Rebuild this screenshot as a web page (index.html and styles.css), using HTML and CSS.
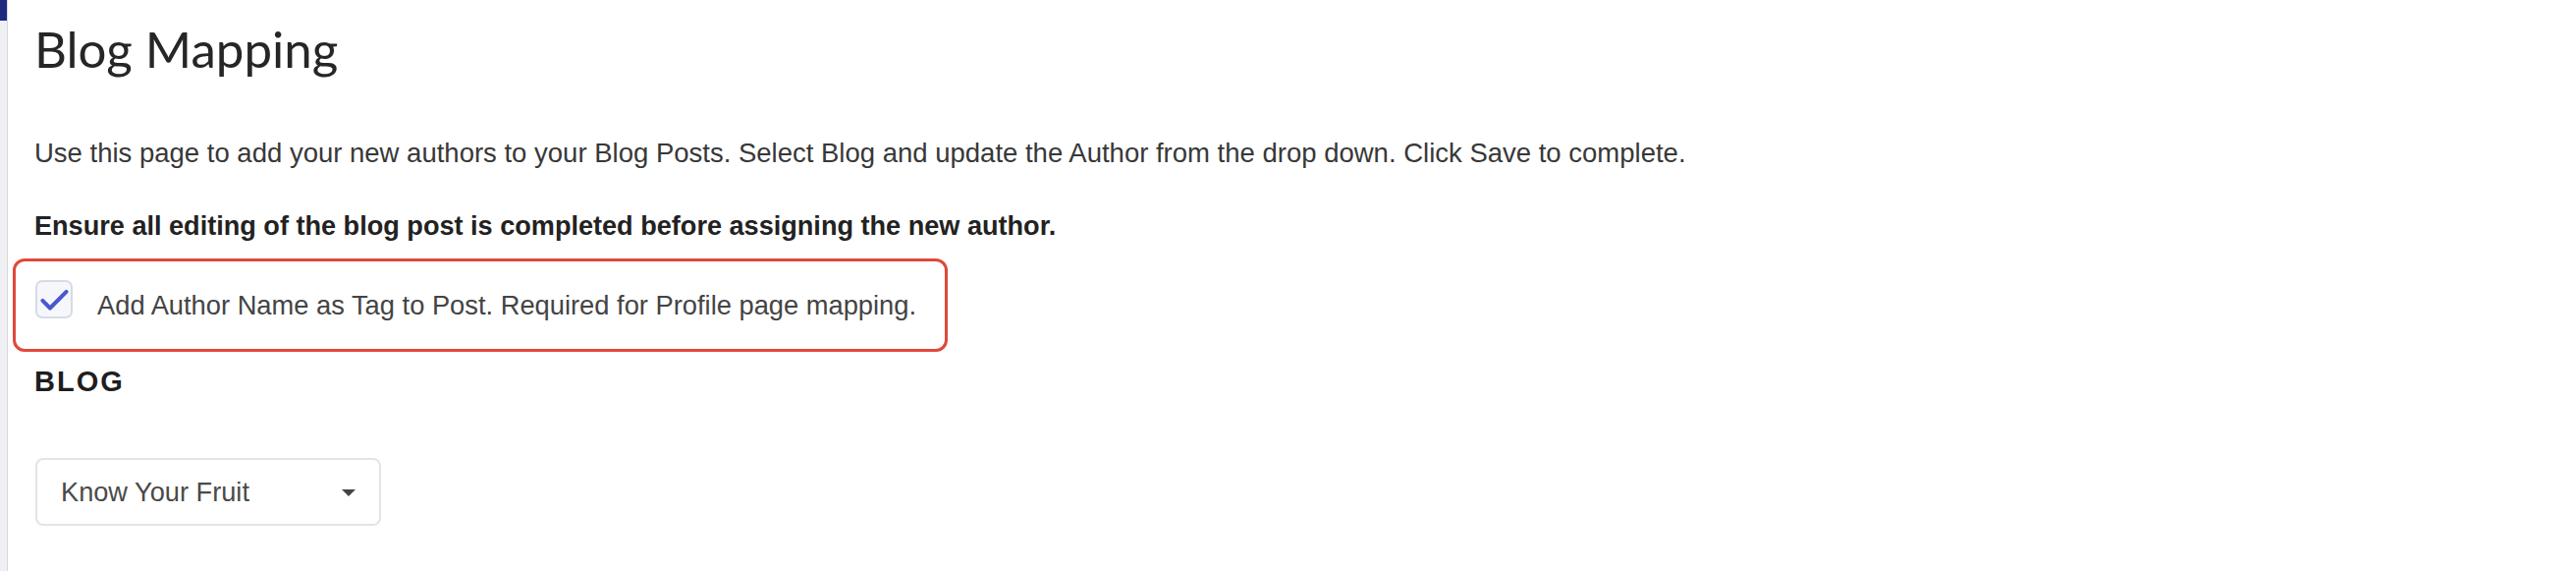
FILE: index.html
```html
<!DOCTYPE html>
<html lang="en">
<head>
<meta charset="utf-8">
<title>Blog Mapping</title>
<link rel="stylesheet" href="styles.css">
</head>
<body>
<div class="app">
  <aside class="rail"><div class="rail-top"></div></aside>
  <main class="content">
    <h1 class="title">Blog Mapping</h1>
    <p class="intro">Use this page to add your new authors to your Blog Posts. Select Blog and update the Author from the drop down. Click Save to complete.</p>
    <p class="warn">Ensure all editing of the blog post is completed before assigning the new author.</p>
    <div class="highlight">
      <label class="check-row">
        <span class="checkbox">
          <svg viewBox="0 0 38 38" width="38" height="38"><path d="M6 20 L14.5 28.5 L33 10" fill="none" stroke="#4b57d1" stroke-width="4.5" stroke-linecap="round" stroke-linejoin="round"/></svg>
        </span>
        <span class="check-label">Add Author Name as Tag to Post. Required for Profile page mapping.</span>
      </label>
    </div>
    <h2 class="section">BLOG</h2>
    <div class="select">
      <span class="select-text">Know Your Fruit</span>
      <span class="caret"></span>
    </div>
  </main>
</div>
</body>
</html>
```
FILE: styles.css
```css
html, body {
  margin: 0;
  padding: 0;
  background: #ffffff;
}
.app {
  display: flex;
  min-height: 581px;
}
.rail {
  width: 7px;
  flex: 0 0 7px;
  background: #eff0f4;
  border-right: 1px solid #d6d8de;
}
.rail-top {
  height: 21px;
  background: #1d2b7d;
}
.content {
  flex: 1;
  padding-left: 27px;
  display: flex;
  flex-direction: column;
  align-items: flex-start;
}
.title {
  margin: 20px 0 0 0;
  font-family: Lato, "Liberation Sans", sans-serif;
  font-weight: 400;
  font-size: 51px;
  line-height: 60px;
  color: #262626;
}
.intro {
  margin: 60px 0 0 0;
  font-family: "Liberation Sans", Arial, sans-serif;
  font-size: 27.5px;
  line-height: 32px;
  color: #383838;
}
.warn {
  margin: 42px 0 0 0;
  font-family: "Liberation Sans", Arial, sans-serif;
  font-weight: 700;
  font-size: 27.1px;
  line-height: 32px;
  color: #222222;
}
.highlight {
  margin: 17px 0 0 -22px;
  width: 926px;
  height: 89px;
  border: 3px solid #e0483a;
  border-radius: 12px;
  display: flex;
  align-items: center;
  padding-left: 20px;
  box-sizing: content-box;
}
.check-row {
  display: flex;
  align-items: center;
  gap: 25px;
}
.checkbox {
  width: 38px;
  height: 39px;
  border: 2px solid #d7dbe7;
  border-radius: 7px;
  background: #f6f7fb;
  display: flex;
  align-items: center;
  justify-content: center;
  box-sizing: border-box;
  margin-top: -12px;
}
.checkbox svg {
  display: block;
}
.check-label {
  font-family: "Liberation Sans", Arial, sans-serif;
  font-size: 27.3px;
  color: #444444;
}
.section {
  margin: 13px 0 0 0;
  font-family: "Liberation Sans", Arial, sans-serif;
  font-weight: 700;
  font-size: 29px;
  letter-spacing: 2px;
  line-height: 34px;
  color: #1e1e1e;
}
.select {
  margin: 61px 0 0 1px;
  width: 352px;
  height: 69px;
  box-sizing: border-box;
  border: 2px solid #e4e4e4;
  border-radius: 8px;
  display: flex;
  align-items: center;
  justify-content: space-between;
  padding: 0 24px 0 24px;
}
.select-text {
  font-family: "Liberation Sans", Arial, sans-serif;
  font-size: 27.2px;
  color: #4a4a4a;
}
.caret {
  width: 0;
  height: 0;
  border-left: 7px solid transparent;
  border-right: 7px solid transparent;
  border-top: 7px solid #444444;
  margin-top: 2px;
}
```
